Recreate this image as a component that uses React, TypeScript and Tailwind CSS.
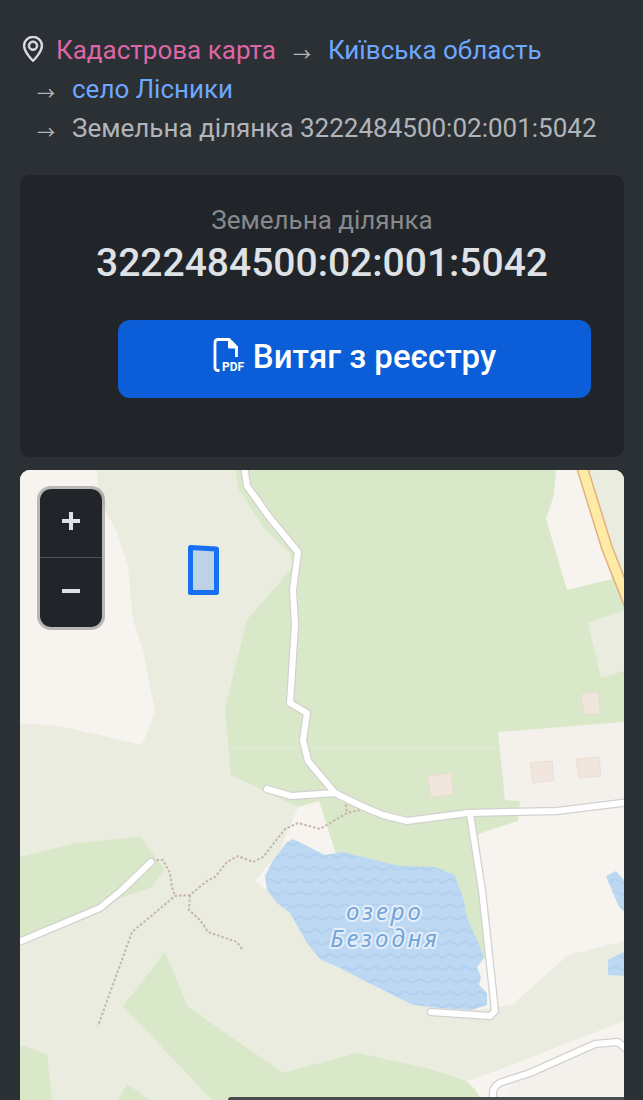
import { BsGeoAlt } from "react-icons/bs";

const crumbs = [
  { label: "Кадастрова карта", href: "#map", color: "text-[#de66a6]" },
  { label: "Київська область", href: "#region", color: "text-[#6ea8fe]" },
  { label: "село Лісники", href: "#village", color: "text-[#6ea8fe]" },
];

const cadastralNumber = "3222484500:02:001:5042";

const roads = [
  "M244 465 L247 486 L270 518 L298 552 L293 590 L295 625 L290 703 L307 713 L303 740 L308 761 L335 793 Q360 806 383 815 L407 821 L468 813 L557 811 L630 802",
  "M267 789 L291 796 L335 793",
  "M470 814 L482 890 L495 1011 L490 1016 L431 1012",
  "M14 944 L100 908 L122 890 L151 862",
  "M493 1105 L493 1092 Q494 1085 502 1082 L530 1073 L595 1044 L618 1042 L630 1052",
];

const trails = [
  "M360 810 L347 813 L320 829 L298 823 L285 829 L263 857 L253 862 L238 856 L227 862 L215 877 L207 881 L190 895 L175 896 L132 932 L98 1026",
  "M345 800 L347 813",
  "M152 860 L163 860 L170 873 L172 887 L175 896",
  "M190 895 L189 910 L200 920 L208 932 L237 942 L242 949",
];

const houses = [
  "581,694 598,692 600,713 584,714",
  "530,763 552,761 554,780 533,783",
  "576,759 599,757 601,776 579,778",
  "428,776 451,773 453,794 431,797",
];

const Breadcrumbs = () => {
  return (
    <nav aria-label="Навігація">
      <ol className="flex flex-wrap text-[26px] leading-[39px] text-[#b1b5b9]">
        {crumbs.map((crumb, i) => (
          <li key={crumb.label} className="flex items-center">
            {i === 0 ? (
              <BsGeoAlt
                className="mr-[10px] mb-1 size-[26px] text-[#dee2e6]"
                stroke="currentColor"
                strokeWidth="0.500"
              />
            ) : (
              <Arrow />
            )}
            <a href={crumb.href} className={crumb.color}>
              {crumb.label}
            </a>
          </li>
        ))}
        <li className="flex items-center whitespace-nowrap">
          <Arrow />
          <span>Земельна ділянка {cadastralNumber}</span>
        </li>
      </ol>
    </nav>
  );
};

const Arrow = () => (
  <span
    aria-hidden="true"
    className="w-[52px] pt-1 text-center font-['Noto_Sans_CJK_SC',sans-serif] text-lg"
  >
    →
  </span>
);

const PdfIcon = () => (
  <svg
    viewBox="0 0 32 34"
    className="mb-1 h-[34px] w-8 overflow-visible"
    aria-hidden="true"
  >
    <path
      d="M6.500 32.500H5Q2 32.500 2 29.500V4.500Q2 1.500 5 1.500H16L23.500 9V19"
      fill="none"
      stroke="currentColor"
      strokeWidth="2.800"
    />
    <path d="M15 1H17L25 9V10.500H16.500Q15 10.500 15 9Z" fill="currentColor" />
    <text
      x="9"
      y="33"
      fill="currentColor"
      className="font-['Roboto',sans-serif] text-[12px] font-bold"
    >
      PDF
    </text>
  </svg>
);

const ParcelCard = () => {
  return (
    <section className="rounded-[10px] bg-[#212529] px-[33px] pt-[26px] pb-[59px]">
      <p className="text-center text-[26px] leading-[39px] text-[#87898c]">
        Земельна ділянка
      </p>
      <h1 className="text-center text-[39px] leading-[47px] font-medium text-[#dee2e6]">
        {cadastralNumber}
      </h1>
      <div className="mt-[33px] pl-[65px]">
        <button className="flex h-[78px] w-full items-center justify-center gap-2 rounded-xl bg-[#0b5ed7] pb-1 text-[33px] font-medium text-white">
          <PdfIcon />
          Витяг з реєстру
        </button>
      </div>
    </section>
  );
};

const MapDrawing = () => (
  <svg
    viewBox="20 470 604 630"
    preserveAspectRatio="xMidYMin slice"
    className="absolute inset-0 h-full w-full"
    role="img"
    aria-label="Карта ділянки"
  >
    <defs>
      <pattern id="waves" width="15" height="12.500" patternUnits="userSpaceOnUse">
        <rect width="15" height="12.500" fill="#bcd8f2" />
        <path
          d="M0 4Q2 4 3.500 6Q7.500 9 11.500 6Q13 4 15 4"
          fill="none"
          stroke="#afceed"
          strokeWidth="1.500"
        />
      </pattern>
    </defs>

    <rect x="20" y="470" width="604" height="630" fill="#e9ecdf" />

    {/* open land */}
    <g fill="#f7f4ef">
      <path d="M20 470H97L98 496L105 510L117 532L128 567L133 620L143 650L149 680L155 712L142 745L60 726L20 723Z" />
      <path d="M470 834L518 801L624 790V941L568 955L512 1005L470 1011L474 960Z" />
      <path d="M467 1081L493 1072L624 1021V1100H480Z" />
      <path d="M298 807L319 801L340 852L267 890L255 881L280 850Z" />
    </g>

    {/* forest */}
    <g fill="#d8e8c8">
      <path d="M236 470L238 488L263 527L290 553L292 568L247 620L232 680L225 710L231 775L298 807L319 801L336 854L420 900L484 958L491 955L478 834L518 821L520 801L624 790V470Z" />
      <path d="M20 857L77 843L140 837L155 857L165 870L150 888L122 897L98 910L20 942Z" />
      <path d="M165 952L123 1006L212 1100H480Q478 1088 463 1080L430 1069L357 1053L283 1073L188 1007Z" />
      <path d="M20 1045L47 1054L52 1100H20Z" />
      <path d="M127 1084L150 1100H118Z" />
    </g>

    {/* plots */}
    <path d="M498 732L624 722V803L520 810V801L505 800Z" fill="#f4f1ec" />
    <path d="M556 470L554 495L546 519L567 590L612 579L583 470Z" fill="#f7f4ef" />
    <path d="M585 470H624V590Z" fill="#e9ecdf" />
    <path d="M588 623L624 610V671L601 678Z" fill="#e9ecdf" />
    <path d="M510 1082L530 1075L595 1046L624 1046V1100H505Z" fill="#f4f1ec" />
    <g fill="#f1e6de" stroke="#ebddd5" strokeWidth="1">
      {houses.map((points) => (
        <polygon key={points} points={points} />
      ))}
    </g>

    {/* water */}
    <g fill="url(#waves)">
      <path d="M293 839L287 842L273 860L265 876L267 890L277 903L290 913L307 943L320 959L340 968L367 982L413 1005L440 1008L472 1010L487 1005L487 993L479 985L481 977L477 967L484 958L480 947L467 918L464 900L457 882L455 875L435 867L400 866L342 852L325 855Z" />
      <path d="M606 876L616 871L624 880V912L618 905Z" />
      <path d="M608 960L624 952V976L608 975Z" />
    </g>

    <g fill="none" stroke="#c8b5a9" strokeWidth="2" strokeDasharray="2.500 2">
      {trails.map((d) => (
        <path key={d} d={d} />
      ))}
    </g>

    <g fill="none" strokeLinecap="round" strokeLinejoin="round">
      {roads.map((d) => (
        <path key={d} d={d} stroke="#d3d1cf" strokeWidth="8.500" />
      ))}
      {roads.map((d) => (
        <path key={d} d={d} stroke="#ffffff" strokeWidth="6" />
      ))}
      <path d="M581 464L607 548L630 606" stroke="#dfb27f" strokeWidth="12" />
      <path d="M581 464L607 548L630 606" stroke="#ffeba6" strokeWidth="9" />
    </g>

    <path d="M20 747.500H624" stroke="#ffffff" strokeOpacity="0.200" />

    <polygon
      points="190.500,547.500 216.500,549 216.500,592.500 190.500,592.500"
      fill="#0d6efd"
      fillOpacity="0.200"
      stroke="#176ff2"
      strokeWidth="5"
      strokeLinejoin="round"
    />

    <g
      textAnchor="middle"
      fill="#74a5d8"
      stroke="#e4effa"
      strokeWidth="4"
      strokeLinejoin="round"
      paintOrder="stroke"
      className="font-['Noto_Sans',sans-serif] text-[24px] tracking-[3px] italic"
    >
      <text x="385" y="920">озеро</text>
      <text x="385" y="947">Безодня</text>
    </g>
  </svg>
);

const MapSection = () => {
  return (
    <section className="relative mt-[13px] min-h-[400px] flex-1 overflow-hidden rounded-t-[10px] bg-[#e9ecdf]">
      <MapDrawing />
      <div className="absolute top-4 left-[17px] overflow-hidden rounded-[14px] border-3 border-black/25 text-[#dee2e6]">
        <button
          aria-label="Збільшити"
          className="flex h-[69px] w-[62px] items-center justify-center border-b border-[#495057] bg-[#212529] pb-1"
        >
          <svg viewBox="0 0 18 18" className="size-[18px]" fill="currentColor">
            <path d="M0 7H7V0H11V7H18V11H11V18H7V11H0Z" />
          </svg>
        </button>
        <button
          aria-label="Зменшити"
          className="flex h-[69px] w-[62px] items-center justify-center bg-[#212529] pb-1"
        >
          <svg viewBox="0 0 18 18" className="size-[18px]" fill="currentColor">
            <path d="M0 7H18V11H0Z" />
          </svg>
        </button>
      </div>
      <div className="absolute right-0 bottom-0 h-[3px] w-[396px] rounded-tl-lg bg-[#484d4e]" />
    </section>
  );
};

const App = () => {
  return (
    <main className="flex min-h-screen flex-col bg-[#2b3035] pt-[31px] pr-[19px] pl-5 font-['Roboto',sans-serif]">
      <Breadcrumbs />
      <div className="mt-[27px]">
        <ParcelCard />
      </div>
      <MapSection />
    </main>
  );
};

export default App;
